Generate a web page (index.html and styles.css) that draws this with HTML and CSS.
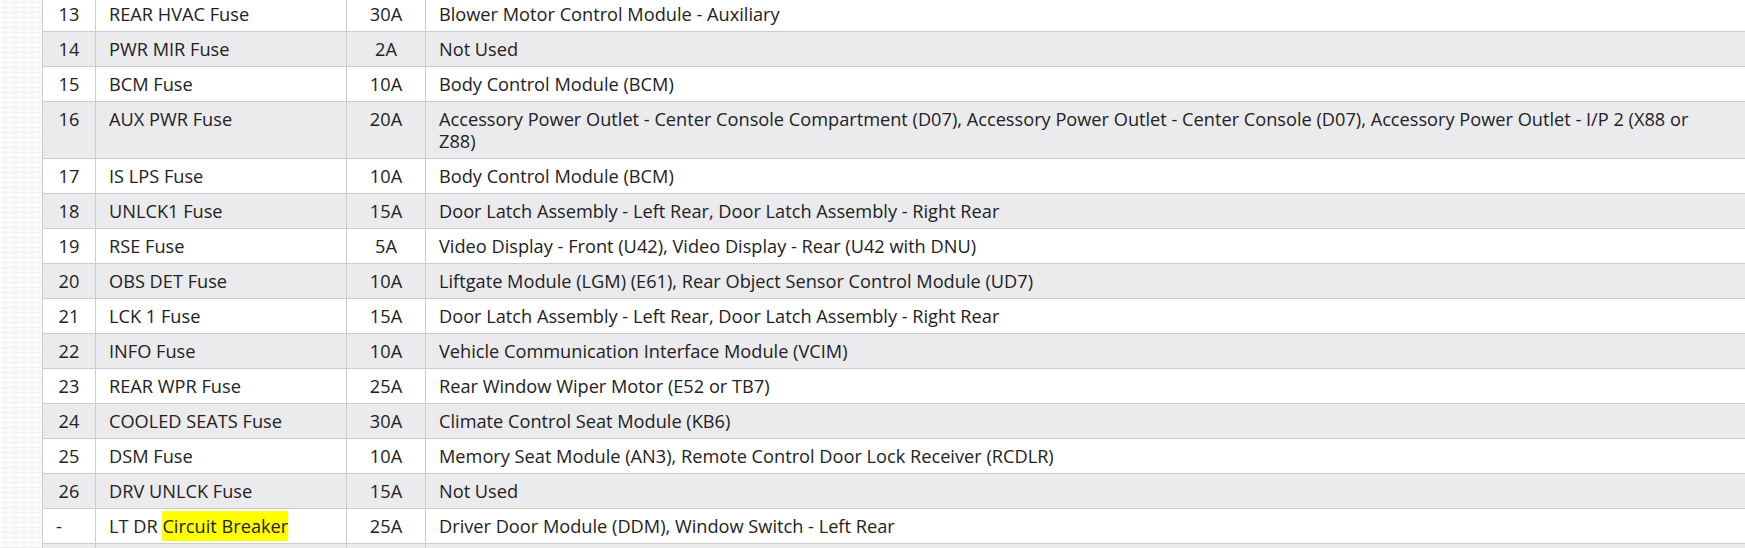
FILE: index.html
```html
<!DOCTYPE html>
<html lang="en">
<head>
<meta charset="utf-8">
<title>Fuse Table</title>
<link rel="stylesheet" href="styles.css">
</head>
<body>
<div class="page">
  <aside class="gutter"></aside>
  <div class="content">
    <table class="fuses">
      <colgroup>
        <col class="c-num">
        <col class="c-name">
        <col class="c-amp">
        <col class="c-use">
      </colgroup>
      <tbody>
        <tr><td class="num">13</td><td>REAR HVAC Fuse</td><td class="amp">30A</td><td class="use">Blower Motor Control Module - Auxiliary</td></tr>
        <tr><td class="num">14</td><td>PWR MIR Fuse</td><td class="amp">2A</td><td class="use">Not Used</td></tr>
        <tr><td class="num">15</td><td>BCM Fuse</td><td class="amp">10A</td><td class="use">Body Control Module (BCM)</td></tr>
        <tr><td class="num">16</td><td>AUX PWR Fuse</td><td class="amp">20A</td><td class="use">Accessory Power Outlet - Center Console Compartment (D07), Accessory Power Outlet - Center Console (D07), Accessory Power Outlet - I/P 2 (X88 or Z88)</td></tr>
        <tr><td class="num">17</td><td>IS LPS Fuse</td><td class="amp">10A</td><td class="use">Body Control Module (BCM)</td></tr>
        <tr><td class="num">18</td><td>UNLCK1 Fuse</td><td class="amp">15A</td><td class="use">Door Latch Assembly - Left Rear, Door Latch Assembly - Right Rear</td></tr>
        <tr><td class="num">19</td><td>RSE Fuse</td><td class="amp">5A</td><td class="use">Video Display - Front (U42), Video Display - Rear (U42 with DNU)</td></tr>
        <tr><td class="num">20</td><td>OBS DET Fuse</td><td class="amp">10A</td><td class="use">Liftgate Module (LGM) (E61), Rear Object Sensor Control Module (UD7)</td></tr>
        <tr><td class="num">21</td><td>LCK 1 Fuse</td><td class="amp">15A</td><td class="use">Door Latch Assembly - Left Rear, Door Latch Assembly - Right Rear</td></tr>
        <tr><td class="num">22</td><td>INFO Fuse</td><td class="amp">10A</td><td class="use">Vehicle Communication Interface Module (VCIM)</td></tr>
        <tr><td class="num">23</td><td>REAR WPR Fuse</td><td class="amp">25A</td><td class="use">Rear Window Wiper Motor (E52 or TB7)</td></tr>
        <tr><td class="num">24</td><td>COOLED SEATS Fuse</td><td class="amp">30A</td><td class="use">Climate Control Seat Module (KB6)</td></tr>
        <tr><td class="num">25</td><td>DSM Fuse</td><td class="amp">10A</td><td class="use">Memory Seat Module (AN3), Remote Control Door Lock Receiver (RCDLR)</td></tr>
        <tr><td class="num">26</td><td>DRV UNLCK Fuse</td><td class="amp">15A</td><td class="use">Not Used</td></tr>
        <tr><td class="num"><span class="dash">-</span></td><td>LT DR <mark class="hl">Circuit Breaker</mark></td><td class="amp">25A</td><td class="use">Driver Door Module (DDM), Window Switch - Left Rear</td></tr>
        <tr><td class="num">&nbsp;</td><td>&nbsp;</td><td class="amp">&nbsp;</td><td class="use">&nbsp;</td></tr>
      </tbody>
    </table>
  </div>
</div>
</body>
</html>
```

FILE: styles.css
```css
html, body {
  margin: 0;
  padding: 0;
  background: #ffffff;
}

body {
  width: 1745px;
  height: 548px;
  overflow: hidden;
}

.page {
  display: flex;
  height: 548px;
  overflow: hidden;
}

.gutter {
  flex: 0 0 42px;
  background-color: #fafafa;
  background-image:
    repeating-linear-gradient(0deg, rgba(230,230,230,0.5) 0 1px, transparent 1px 5px),
    repeating-linear-gradient(90deg, rgba(255,255,255,0.9) 0 2px, transparent 2px 9px);
}

.content {
  flex: 0 0 auto;
  margin-top: -4px;
}

.fuses {
  border-collapse: collapse;
  table-layout: fixed;
  width: 1770px;
  font-family: "Open Sans", "Noto Sans", "DejaVu Sans", sans-serif;
  font-size: 18.2px;
  line-height: 22px;
  color: #222222;
}

.c-num { width: 53px; }
.c-name { width: 251px; }
.c-amp { width: 79px; }
.c-use { width: auto; }

.fuses td {
  border: 1px solid #cccccc;
  padding: 6px 13px;
  vertical-align: top;
  text-align: left;
}

.fuses td.use {
  padding-right: 100px;
}

.fuses tr:nth-child(odd) td { background: #ffffff; }
.fuses tr:nth-child(even) td { background: #ebebed; }

.fuses td.num {
  text-align: center;
  padding-left: 4px;
  padding-right: 4px;
}

.fuses td.amp {
  text-align: center;
  padding-left: 4px;
  padding-right: 4px;
}

.dash {
  margin-right: 20px;
}

.hl {
  background: #ffff00;
  color: inherit;
  padding: 3px 0;
}
```
